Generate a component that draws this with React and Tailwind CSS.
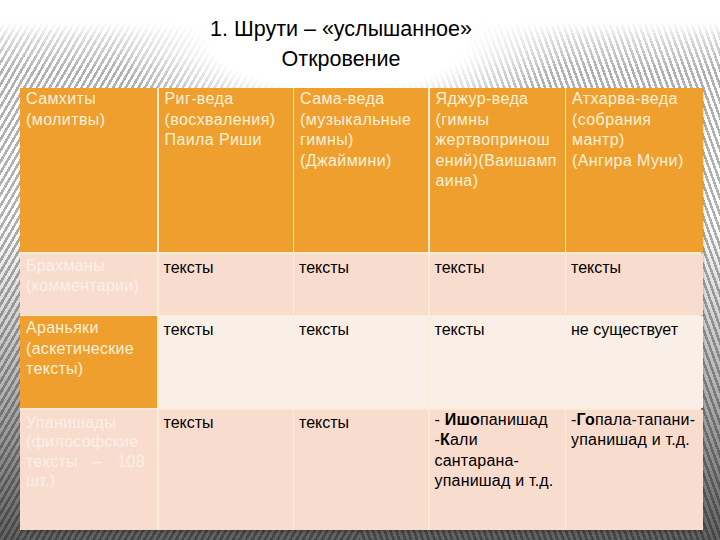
const header = [
    ["Самхиты", "(молитвы)"],
    ["Риг-веда", "(восхваления)", "Паила Риши"],
    ["Сама-веда", "(музыкальные", "гимны)", "(Джаймини)"],
    ["Яджур-веда", "(гимны", "жертвопринош", "ений)(Ваишамп", "аина)"],
    ["Атхарва-веда", "(собрания", "мантр)", "(Ангира Муни)"],
];

const Lines = ({ lines, className = "" }) => (
    <div className={"leading-[20.5px] " + className}>
        {lines.map((l, i) => (
            <div key={i} className="whitespace-nowrap">{l}</div>
        ))}
    </div>
);

export default function App() {
    return (
        <div
            className="w-[720px] h-[540px] overflow-hidden flex flex-col text-[16px] [background:radial-gradient(ellipse_230px_90px_at_340px_40px,#ffffff_55%,rgba(255,255,255,0)_100%),linear-gradient(to_bottom,#ffffff_0px,#ffffff_22px,rgba(255,255,255,0.5)_40px,rgba(255,255,255,0)_70px),linear-gradient(to_bottom,rgba(0,0,0,0)_40%,rgba(0,0,0,0.3)_72%,rgba(0,0,0,0.62)_100%),repeating-linear-gradient(120deg,#ffffff_0px,#ffffff_3px,#b0b0b0_3px,#b0b0b0_5.5px)_left_top/360px_100%_no-repeat,repeating-linear-gradient(70deg,#ffffff_0px,#ffffff_3px,#b0b0b0_3px,#b0b0b0_5.5px)_right_top/360px_100%_no-repeat]"
            style={{ fontFamily: '"Liberation Sans", Arial, sans-serif' }}
        >
            {/* Title */}
            <div className="pt-[14px] pr-[38px] text-center text-[21.5px] leading-[30px] text-black">
                <div>1. Шрути – «услышанное»</div>
                <div>Откровение</div>
            </div>

            {/* Table */}
            <div className="ml-[20px] mt-[14px] w-[681px] grid grid-cols-[137px_134px_134px_135px_137px] grid-rows-[164px_61px_92px_120px] gap-[1.5px] bg-[#fbecd6] shadow-[2px_2px_3px_rgba(0,0,0,0.25)]">
                {header.map((lines, i) => (
                    <div key={i} className="bg-[#ee9f2d] px-[6px] pt-[1px] text-[#fdf1dc] tracking-[0.4px]">
                        <Lines lines={lines} />
                    </div>
                ))}

                {/* Брахманы */}
                <div className="bg-[#f8dccd] px-[6px] pt-[2px] text-[#fcf0e9] tracking-[0.3px]">
                    <Lines lines={["Брахманы", "(комментарии)"]} />
                </div>
                {["тексты", "тексты", "тексты", "тексты"].map((t, i) => (
                    <div key={i} className="bg-[#f8dccd] px-[5px] pt-[3px] text-black leading-[21px]">{t}</div>
                ))}

                {/* Араньяки */}
                <div className="bg-[#ee9f2d] px-[6px] pt-[2px] text-[#fdf1dc] tracking-[0.3px]">
                    <Lines lines={["Араньяки", "(аскетические", "тексты)"]} />
                </div>
                {["тексты", "тексты", "тексты", "не существует"].map((t, i) => (
                    <div key={i} className="bg-[#faefe6] px-[5px] pt-[3px] text-black leading-[21px]">{t}</div>
                ))}

                {/* Упанишады */}
                <div className="bg-[#f8dccd] px-[6px] pt-[3px] text-[#fcefe8] leading-[19.5px] tracking-[0.3px]">
                    <div>Упанишады</div>
                    <div>(философские</div>
                    <div className="flex justify-between pr-[6px]"><span>тексты</span><span>–</span><span>108</span></div>
                    <div>шт.)</div>
                </div>
                <div className="bg-[#f8dccd] px-[5px] pt-[2px] text-black leading-[21px]">тексты</div>
                <div className="bg-[#f8dccd] px-[5px] pt-[2px] text-black leading-[21px]">тексты</div>
                <div className="bg-[#f8dccd] px-[5px] pt-0 text-black leading-[20.5px] tracking-[0.2px]">
                    <div className="whitespace-nowrap">- <b>Ишо</b>панишад</div>
                    <div>-<b>К</b>али</div>
                    <div>сантарана-</div>
                    <div className="whitespace-nowrap">упанишад и т.д.</div>
                </div>
                <div className="bg-[#f8dccd] px-[5px] pt-0 text-black leading-[20.5px] tracking-[0.2px]">
                    <div className="whitespace-nowrap">-<b>Го</b>пала-тапани-</div>
                    <div className="whitespace-nowrap">упанишад и т.д.</div>
                </div>
            </div>
        </div>
    );
}
